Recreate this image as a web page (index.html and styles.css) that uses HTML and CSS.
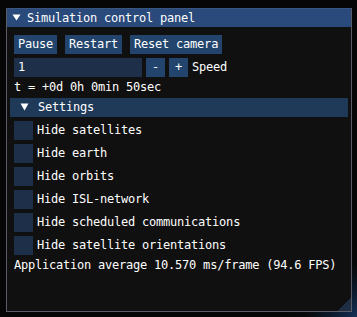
FILE: index.html
```html
<!DOCTYPE html>
<html>
<head>
<meta charset="utf-8">
<link rel="stylesheet" href="styles.css">
</head>
<body>
<div class="win">
  <div class="title">
    <svg class="arrow" width="13" height="13" viewBox="0 0 13 13"><polygon points="2.5,2.5 10.5,2.5 6.5,8.5" fill="#fff"/></svg>
    <span>Simulation control panel</span>
  </div>
  <div class="content">
    <div class="row">
      <div class="btn">Pause</div>
      <div class="btn">Restart</div>
      <div class="btn">Reset camera</div>
    </div>
    <div class="row inner">
      <div class="input">1</div>
      <div class="btn sq">-</div>
      <div class="btn sq">+</div>
      <span class="lbl">Speed</span>
    </div>
    <div class="text">t = +0d 0h 0min 50sec</div>
    <div class="header">
      <svg class="arrow" width="13" height="13" viewBox="0 0 13 13"><polygon points="2.5,2.5 10.5,2.5 6.5,9.5" fill="#fff"/></svg>
      <span>Settings</span>
    </div>
    <div class="check"><span class="box"></span><span>Hide satellites</span></div>
    <div class="check"><span class="box"></span><span>Hide earth</span></div>
    <div class="check"><span class="box"></span><span>Hide orbits</span></div>
    <div class="check"><span class="box"></span><span>Hide ISL-network</span></div>
    <div class="check"><span class="box"></span><span>Hide scheduled communications</span></div>
    <div class="check"><span class="box"></span><span>Hide satellite orientations</span></div>
    <div class="text">Application average 10.570 ms/frame (94.6 FPS)</div>
  </div>
  <div class="grip"></div>
</div>
</body>
</html>
```
FILE: styles.css
```css
html, body {
  margin: 0;
  padding: 0;
}
body {
  width: 357px;
  height: 317px;
  overflow: hidden;
  background: radial-gradient(circle at 385px 345px, #2a5590 0px, #1a3a66 30px, #0c1a2e 60px, #070809 85px, #060606 110px);
  font-family: "DejaVu Sans Mono", "Liberation Mono", monospace;
  font-size: 12px;
  letter-spacing: -0.22px;
  line-height: 13px;
  color: #ffffff;
  padding-top: 8px;
  padding-left: 6px;
  box-sizing: border-box;
}
.win {
  position: relative;
  width: 346px;
  height: 304px;
  box-sizing: border-box;
  border: 1px solid #5c5c66;
  border-top-color: #3a5680;
  background: #101010;
  display: flex;
  flex-direction: column;
}
.title {
  height: 18px;
  background: #294a7a;
  display: flex;
  align-items: center;
  padding-left: 3px;
  gap: 4px;
  white-space: pre;
}
.arrow {
  display: block;
  flex: none;
}
.content {
  padding: 8px 7px;
  display: flex;
  flex-direction: column;
  gap: 4px;
}
.row {
  display: flex;
  gap: 8px;
  align-items: center;
}
.row.inner {
  gap: 4px;
}
.btn {
  background: #23456d;
  height: 19px;
  padding: 3px 4px;
  box-sizing: border-box;
  white-space: pre;
}
.btn.sq {
  width: 19px;
  padding: 3px 0;
  text-align: center;
}
.input {
  width: 128px;
  height: 19px;
  box-sizing: border-box;
  padding: 3px 4px;
  background: #1d2f49;
}
.lbl {
  white-space: pre;
}
.text {
  white-space: pre;
  height: 13px;
}
.header {
  margin: 0 -4px;
  height: 19px;
  background: #1f3958;
  display: flex;
  align-items: center;
  padding-left: 8px;
  gap: 7px;
  white-space: pre;
}
.check {
  display: flex;
  align-items: center;
  gap: 4px;
  height: 19px;
  white-space: pre;
}
.box {
  width: 19px;
  height: 19px;
  background: #1d2f49;
  flex: none;
}
.grip {
  position: absolute;
  right: 0;
  bottom: 0;
  width: 14px;
  height: 14px;
  background: linear-gradient(to bottom right, transparent 50%, #1c2d44 50%);
}
```
